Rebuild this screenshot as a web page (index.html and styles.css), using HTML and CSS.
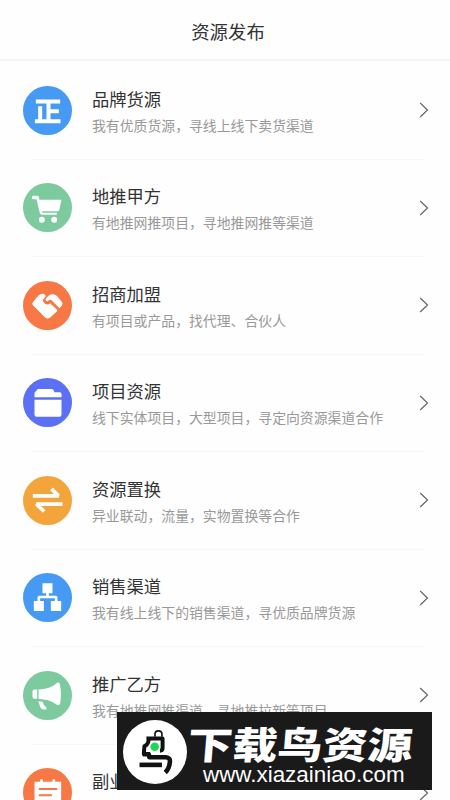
FILE: index.html
```
<!DOCTYPE html>
<html lang="zh-CN">
<head>
<meta charset="utf-8">
<title>资源发布</title>
<link rel="stylesheet" href="styles.css">
</head>
<body>
<div class="screen">
  <header class="header"><h1>资源发布</h1></header>
  <main class="list">
    <section class="row">
      <svg class="icon" viewBox="39.5 47.5 147 147"><circle class="blue" cx="113" cy="121" r="73.5"/><path class="line" stroke-width="12" d="M78 94H151M75 153H152M91 108V153M116 94V153M116 123H147"/></svg>
      <div class="text"><h2>品牌货源</h2><p>我有优质货源，寻线上线下卖货渠道</p></div>
      <svg class="arrow" viewBox="0 0 10 16"><path d="M1.2 1 8.5 8 1.2 15"/></svg>
    </section>
    <section class="row">
      <svg class="icon" viewBox="39.5 46 147 147"><circle class="green" cx="113" cy="119.5" r="73.5"/><path class="fill" d="M68 84H82Q86 84 87 88L89 96H155L148 128Q147 131 143 131H97L98 135H141V141H95Q91 141 90 137L80 95H71Q67 95 66 90Z"/><circle class="fill" cx="96" cy="156" r="9"/><circle class="fill" cx="133" cy="156" r="9"/></svg>
      <div class="text"><h2>地推甲方</h2><p>有地推网推项目，寻地推网推等渠道</p></div>
      <svg class="arrow" viewBox="0 0 10 16"><path d="M1.2 1 8.5 8 1.2 15"/></svg>
    </section>
    <section class="row">
      <svg class="icon" viewBox="39.5 47.5 147 147"><circle class="orange" cx="113" cy="121" r="73.5"/><path class="fill" d="M68 113Q66 117 70 121L105 156Q113 163 121 157L141 139Q144 136 141 133L121 114Q113 121 105 115Q94 107 104 98Q112 91 101 86Q92 85 85 92Z"/><path class="fill" d="M117 91Q124 86 133 88Q139 89 143 94L157 111Q160 116 156 121L149 129L126 106Q121 102 116 106Q112 111 108 106Q105 103 109 99Z"/></svg>
      <div class="text"><h2>招商加盟</h2><p>有项目或产品，找代理、合伙人</p></div>
      <svg class="arrow" viewBox="0 0 10 16"><path d="M1.2 1 8.5 8 1.2 15"/></svg>
    </section>
    <section class="row">
      <svg class="icon" viewBox="39.5 46 147 147"><circle class="indigo" cx="113" cy="119.5" r="73.5"/><path class="fill" d="M74 104V90L84 79H126Q130 79 132 84L134 89H150Q155 89 155 94V104ZM74 111H155V156Q155 162 149 162H80Q74 162 74 156Z"/></svg>
      <div class="text"><h2>项目资源</h2><p>线下实体项目，大型项目，寻定向资源渠道合作</p></div>
      <svg class="arrow" viewBox="0 0 10 16"><path d="M1.2 1 8.5 8 1.2 15"/></svg>
    </section>
    <section class="row">
      <svg class="icon" viewBox="39.5 47.5 147 147"><circle class="amber" cx="113" cy="121" r="73.5"/><path class="line" stroke-width="11" d="M69 107H146L125 86M158 132H80L103 154"/></svg>
      <div class="text"><h2>资源置换</h2><p>异业联动，流量，实物置换等合作</p></div>
      <svg class="arrow" viewBox="0 0 10 16"><path d="M1.2 1 8.5 8 1.2 15"/></svg>
    </section>
    <section class="row">
      <svg class="icon" viewBox="39.5 46 147 147"><circle class="blue" cx="113" cy="119.5" r="73.5"/><path class="fill" d="M98 77H128V107H98ZM72 130H102V160H72ZM123 130H154V160H123Z"/><path class="line" stroke-width="8" d="M113 105V118M87 132V118H139V132"/></svg>
      <div class="text"><h2>销售渠道</h2><p>我有线上线下的销售渠道，寻优质品牌货源</p></div>
      <svg class="arrow" viewBox="0 0 10 16"><path d="M1.2 1 8.5 8 1.2 15"/></svg>
    </section>
    <section class="row">
      <svg class="icon" viewBox="39.5 47.5 147 147"><circle class="green" cx="113" cy="121" r="73.5"/><path class="fill" d="M82 103H73Q68 103 68 109V125Q68 131 73 131H82ZM86 103Q121 102 140 84Q146 79 150 86Q156 116 151 145Q148 153 141 149Q121 133 86 131ZM85 138 98 140Q101 152 109 156L110 163H102Q95 163 92 157Z"/></svg>
      <div class="text"><h2>推广乙方</h2><p>我有地推网推渠道，寻地推拉新等项目</p></div>
      <svg class="arrow" viewBox="0 0 10 16"><path d="M1.2 1 8.5 8 1.2 15"/></svg>
    </section>
    <section class="row">
      <svg class="icon" viewBox="39.5 340 147 147"><circle class="orange" cx="113" cy="413.5" r="73.5"/><path class="fill" d="M74 381H91V374H99V381H128V374H136V381H154V454H74Z"/><path class="orange-line" d="M87 403H142M87 422H126"/></svg>
      <div class="text"><h2>副业</h2></div>
      <svg class="arrow" viewBox="0 0 10 16"><path d="M1.2 1 8.5 8 1.2 15"/></svg>
    </section>
  </main>
  <aside class="banner">
    <svg class="bird" viewBox="128 164 194 194"><circle class="fill" cx="225" cy="261" r="97"/><g class="ink"><path stroke-width="5" d="M225 215V205Q226 197 235 197Q246 197 246 207V215"/><path stroke-width="12" d="M199 220H248V250Q248 257 240 257M206 224Q204 240 193 243L191 267H210"/><path stroke-width="14" d="M188 268H206L208 277H258Q272 278 270 292Q268 312 256 323"/><path stroke-width="14" d="M178 300H246"/></g><circle class="dot" cx="224" cy="245" r="13"/></svg>
    <div class="brand"><div class="name">下载鸟资源</div><div class="url">www.xiazainiao.com</div></div>
  </aside>
</div>
</body>
</html>
```
FILE: styles.css
```
* { box-sizing: border-box; margin: 0; padding: 0; }
body { background: #fefefe; font-family: "Noto Sans CJK SC", sans-serif; }
.screen { position: relative; width: 450px; height: 800px; overflow: hidden; }
.header { height: 61px; padding-top: 16px; border-bottom: 2px solid #f5f5f5; text-align: center; padding-left: 6px; }
.header h1 { font-size: 18.4px; line-height: 30px; font-weight: 400; color: #333; }
.list { padding-top: 0.5px; }
.row { position: relative; display: flex; align-items: center; height: 97.5px; padding: 0 21px 0 23.3px; }
.row::after { content: ""; position: absolute; left: 31px; right: 25px; bottom: -0.5px; height: 1px; background: #f6f6f6; }
.icon { width: 49px; height: 49px; flex: none; }
.text { flex: 1; height: 54px; margin: 3px 0 0 19.7px; white-space: nowrap; }
.text h2 { font-size: 17.3px; line-height: 27px; font-weight: 400; color: #333; }
.text p { font-size: 13.87px; line-height: 27px; color: #999; }
.arrow { width: 10px; height: 16px; flex: none; fill: none; stroke: #666; stroke-width: 1.2; }
.blue { fill: #469af4; }
.green { fill: #7cca9e; }
.orange { fill: #f87845; }
.indigo { fill: #5b70f5; }
.amber { fill: #f3a43b; }
.fill { fill: #fff; }
.line { fill: none; stroke: #fff; stroke-linejoin: bevel; }
.orange-line { fill: none; stroke: #f87845; stroke-width: 6; }
.banner { position: absolute; left: 117px; top: 712px; width: 315px; height: 78px; background: #1a1a1a; color: #fff; display: flex; padding: 8px 0 0 6px; }
.bird { width: 64px; height: 64px; flex: none; }
.ink { fill: none; stroke: #111; stroke-linejoin: round; }
.dot { fill: #20d65a; }
.brand { margin-left: 1px; white-space: nowrap; }
.name { font-size: 37.5px; line-height: 46px; font-weight: 900; height: 43px; transform: scaleX(1.2) skewX(-4deg); transform-origin: left center; }
.url { font-family: "Liberation Sans", sans-serif; font-size: 22.4px; line-height: 24px; margin: 0 0 0 15px; }
```
